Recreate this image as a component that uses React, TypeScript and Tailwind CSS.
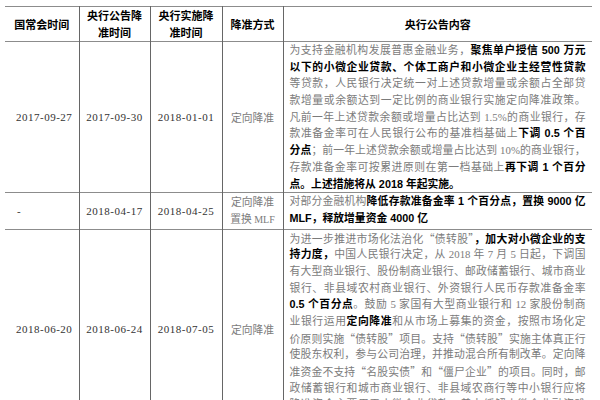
import React from "react";

type P = { children?: React.ReactNode };

const G = ({ children }: P) => (
  <span className="text-[#7b7b7b] [font-family:'Liberation_Serif','Noto_Sans_CJK_SC',serif]">{children}</span>
);
const B = ({ children }: P) => (
  <span className="font-bold text-black [font-family:'Liberation_Sans','Noto_Sans_CJK_SC',sans-serif]">{children}</span>
);
const Q = ({ children }: P) => (
  <span className="[font-family:'Noto_Sans_CJK_SC',sans-serif]">{children}</span>
);
const L = ({ children }: P) => (
  <div className="h-[16.7px] text-justify [text-align-last:justify]">{children}</div>
);
const E = ({ children }: P) => <div className="h-[16.7px] text-left">{children}</div>;

const dateCls =
  "text-[11px] text-[#333333] tracking-[0.5px] [font-family:'Liberation_Serif',serif] align-middle border-l border-[#666666]";
const methodCls =
  "text-[10.8px] leading-[16.7px] text-[#7b7b7b] [font-family:'Noto_Sans_CJK_SC',sans-serif] align-middle text-center border-l border-[#666666] whitespace-nowrap";
const contentCls =
  "border-l border-[#666666] pl-[6px] pr-[6px] py-0 align-top text-[10.8px] leading-[16.7px]";
const thCls =
  "border-l border-[#666666] font-bold text-[11px] leading-[17px] text-black text-center align-middle p-0 h-[34px] [font-family:'Noto_Sans_CJK_SC',sans-serif]";

export default function App() {
  return (
    <div lang="zh-CN" className="w-[600px] h-[400px] overflow-hidden bg-white">
      <table className="border-collapse table-fixed w-[587px] ml-[5px] mt-[6px] border-t border-[#8c8c8c]">
        <colgroup>
          <col className="w-[74px]" />
          <col className="w-[71px]" />
          <col className="w-[72px]" />
          <col className="w-[61px]" />
          <col className="w-[309px]" />
        </colgroup>
        <thead>
          <tr className="border-b border-[#8c8c8c]">
            <th className="font-bold text-[11px] leading-[17px] text-black text-center align-middle p-0 h-[34px] [font-family:'Noto_Sans_CJK_SC',sans-serif]">
              国常会时间
            </th>
            <th className={thCls}>
              央行公告降
              <br />
              准时间
            </th>
            <th className={thCls}>
              央行实施降
              <br />
              准时间
            </th>
            <th className={thCls}>降准方式</th>
            <th className={thCls}>央行公告内容</th>
          </tr>
        </thead>
        <tbody>
          <tr className="border-b border-[#8c8c8c]">
            <td className="text-[11px] text-[#333333] tracking-[0.5px] [font-family:'Liberation_Serif',serif] align-middle text-left pl-[11px]">
              2017-09-27
            </td>
            <td className={dateCls + " text-center"}>2017-09-30</td>
            <td className={dateCls + " text-center"}>2018-01-01</td>
            <td className={methodCls}>定向降准</td>
            <td className={contentCls}>
              <div className="w-[296px]">
                <L>
                  <G>为支持金融机构发展普惠金融业务，</G>
                  <B>聚焦单户授信 500 万元</B>
                </L>
                <L>
                  <B>以下的小微企业贷款、个体工商户和小微企业主经营性贷款</B>
                </L>
                <L>
                  <G>等贷款，人民银行决定统一对上述贷款增量或余额占全部贷</G>
                </L>
                <L>
                  <G>款增量或余额达到一定比例的商业银行实施定向降准政策。</G>
                </L>
                <L>
                  <G>凡前一年上述贷款余额或增量占比达到 1.5%的商业银行，存</G>
                </L>
                <L>
                  <G>款准备金率可在人民银行公布的基准档基础上</G>
                  <B>下调 0.5 个百</B>
                </L>
                <L>
                  <B>分点</B>
                  <G>；前一年上述贷款余额或增量占比达到 10%的商业银行，</G>
                </L>
                <L>
                  <G>存款准备金率可按累进原则在第一档基础上</G>
                  <B>再下调 1 个百分</B>
                </L>
                <E>
                  <B>点。上述措施将从 2018 年起实施。</B>
                </E>
              </div>
            </td>
          </tr>
          <tr className="border-b border-[#8c8c8c]">
            <td className="text-[11px] text-[#333333] [font-family:'Liberation_Serif',serif] align-middle text-left pl-[12px]">
              -
            </td>
            <td className={dateCls + " text-center"}>2018-04-17</td>
            <td className={dateCls + " text-center"}>2018-04-25</td>
            <td className={methodCls}>
              定向降准
              <br />
              <span className="[font-family:'Noto_Sans_CJK_SC',sans-serif]">置换 </span>
              <span className="text-[10px] [font-family:'Liberation_Serif',serif]">MLF</span>
            </td>
            <td className={contentCls}>
              <div className="w-[296px]">
                <L>
                  <G>对部分金融机构</G>
                  <B>降低存款准备金率 1 个百分点，置换 9000 亿</B>
                </L>
                <E>
                  <B>MLF，释放增量资金 4000 亿</B>
                </E>
              </div>
            </td>
          </tr>
          <tr className="border-b border-[#8c8c8c]">
            <td className="text-[11px] text-[#333333] tracking-[0.5px] [font-family:'Liberation_Serif',serif] align-middle text-left pl-[11px]">
              2018-06-20
            </td>
            <td className={dateCls + " text-center"}>2018-06-24</td>
            <td className={dateCls + " text-center"}>2018-07-05</td>
            <td className={methodCls}>定向降准</td>
            <td className={contentCls}>
              <div className="w-[296px]">
                <L>
                  <G>
                    为进一步推进市场化法治化<Q>“</Q>债转股<Q>”</Q>
                  </G>
                  <B>，加大对小微企业的支</B>
                </L>
                <L>
                  <B>持力度，</B>
                  <G>中国人民银行决定，从 2018 年 7 月 5 日起，下调国</G>
                </L>
                <L>
                  <G>有大型商业银行、股份制商业银行、邮政储蓄银行、城市商业</G>
                </L>
                <L>
                  <G>银行、非县域农村商业银行、外资银行人民币存款准备金率</G>
                </L>
                <L>
                  <B>0.5 个百分点</B>
                  <G>。鼓励 5 家国有大型商业银行和 12 家股份制商</G>
                </L>
                <L>
                  <G>业银行运用</G>
                  <B>定向降准</B>
                  <G>和从市场上募集的资金，按照市场化定</G>
                </L>
                <L>
                  <G>
                    价原则实施<Q>“</Q>债转股<Q>”</Q>项目。支持<Q>“</Q>债转股<Q>”</Q>实施主体真正行
                  </G>
                </L>
                <L>
                  <G>使股东权利，参与公司治理，并推动混合所有制改革。定向降</G>
                </L>
                <L>
                  <G>
                    准资金不支持<Q>“</Q>名股实债<Q>”</Q>和<Q>“</Q>僵尸企业<Q>”</Q>的项目。同时，邮
                  </G>
                </L>
                <L>
                  <G>政储蓄银行和城市商业银行、非县域农商行等中小银行应将</G>
                </L>
                <L>
                  <G>降准资金主要用于小微企业贷款，着力缓解小微企业融资难</G>
                </L>
                <E>
                  <G>融资贵问题。</G>
                </E>
              </div>
            </td>
          </tr>
        </tbody>
      </table>
    </div>
  );
}
